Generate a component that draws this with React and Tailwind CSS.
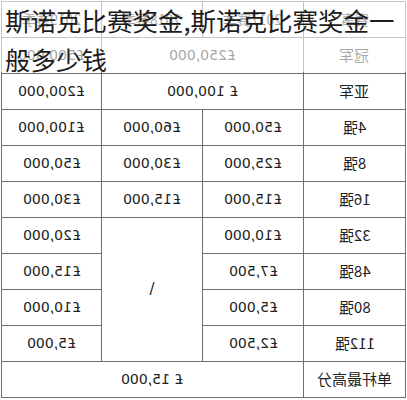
import React from 'react';

const cell = "bg-white flex items-center justify-center text-[14px] text-[#222]";
const num = { fontFamily: '"DejaVu Sans", "Noto Sans CJK SC", sans-serif' };
const cjk = { fontFamily: '"Noto Sans CJK SC", "DejaVu Sans", sans-serif' };

// mirrored glyphs, as in the source picture
const M = ({ children, zh }) => (
  <span className="inline-block -scale-x-100 whitespace-nowrap" style={zh ? cjk : num}>
    {children}
  </span>
);

const rows = [
  ['£100,000', '£60,000', '£50,000', '4强'],
  ['£50,000', '£30,000', '£25,000', '8强'],
  ['£30,000', '£15,000', '£15,000', '16强'],
];

const lower = [
  ['£20,000', '£10,000', '32强'],
  ['£15,000', '£7,500', '48强'],
  ['£10,000', '£5,000', '80强'],
  ['£5,000', '£2,500', '112强'],
];

const App = () => {
  return (
    <div className="relative w-[407px] h-[400px] bg-white overflow-hidden">
      <div className="ml-[1px] mt-[1px] w-[405px] grid grid-cols-[99px_100px_100px_101px] grid-rows-[repeat(11,35px)] gap-px p-px bg-[#6f6f6f]">
        <div className={cell}><M zh>2019赛季</M></div>
        <div className={cell}><M zh>2018赛季</M></div>
        <div className={cell}><M zh>2017赛季</M></div>
        <div className={cell}><M zh>赛事</M></div>

        <div className={cell}><M>£500,000</M></div>
        <div className={`${cell} col-span-2`}><M>£250,000</M></div>
        <div className={`${cell} text-[15px]`}><M zh>冠军</M></div>

        <div className={cell}><M>£200,000</M></div>
        <div className={`${cell} col-span-2`}><M>£ 100,000</M></div>
        <div className={`${cell} text-[15px]`}><M zh>亚军</M></div>

        {rows.map((r) => (
          <React.Fragment key={r[3]}>
            <div className={cell}><M>{r[0]}</M></div>
            <div className={cell}><M>{r[1]}</M></div>
            <div className={cell}><M>{r[2]}</M></div>
            <div className={`${cell} text-[15px]`}><M zh>{r[3]}</M></div>
          </React.Fragment>
        ))}

        {lower.map((r, i) => (
          <React.Fragment key={r[2]}>
            <div className={cell}><M>{r[0]}</M></div>
            {i === 0 && (
              <div className="bg-white row-span-4 flex justify-center items-center text-[15px] text-[#222]" style={num}>
                /
              </div>
            )}
            <div className={cell}><M>{r[1]}</M></div>
            <div className={`${cell} text-[15px]`}><M zh>{r[2]}</M></div>
          </React.Fragment>
        ))}

        <div className={`${cell} col-span-3`}><M>£ 15,000</M></div>
        <div className={`${cell} text-[15px]`}><M zh>单杆最高分</M></div>
      </div>

      <div className="absolute top-0 left-0 w-full h-[72px] bg-white/60">
        <div
          className="pl-[5px] text-[25.5px] leading-[39px] text-[#1c1c1c] whitespace-nowrap"
          style={cjk}
        >
          斯诺克比赛奖金,斯诺克比赛奖金一
          <br />
          般多少钱
        </div>
      </div>
    </div>
  );
};

export default App;
